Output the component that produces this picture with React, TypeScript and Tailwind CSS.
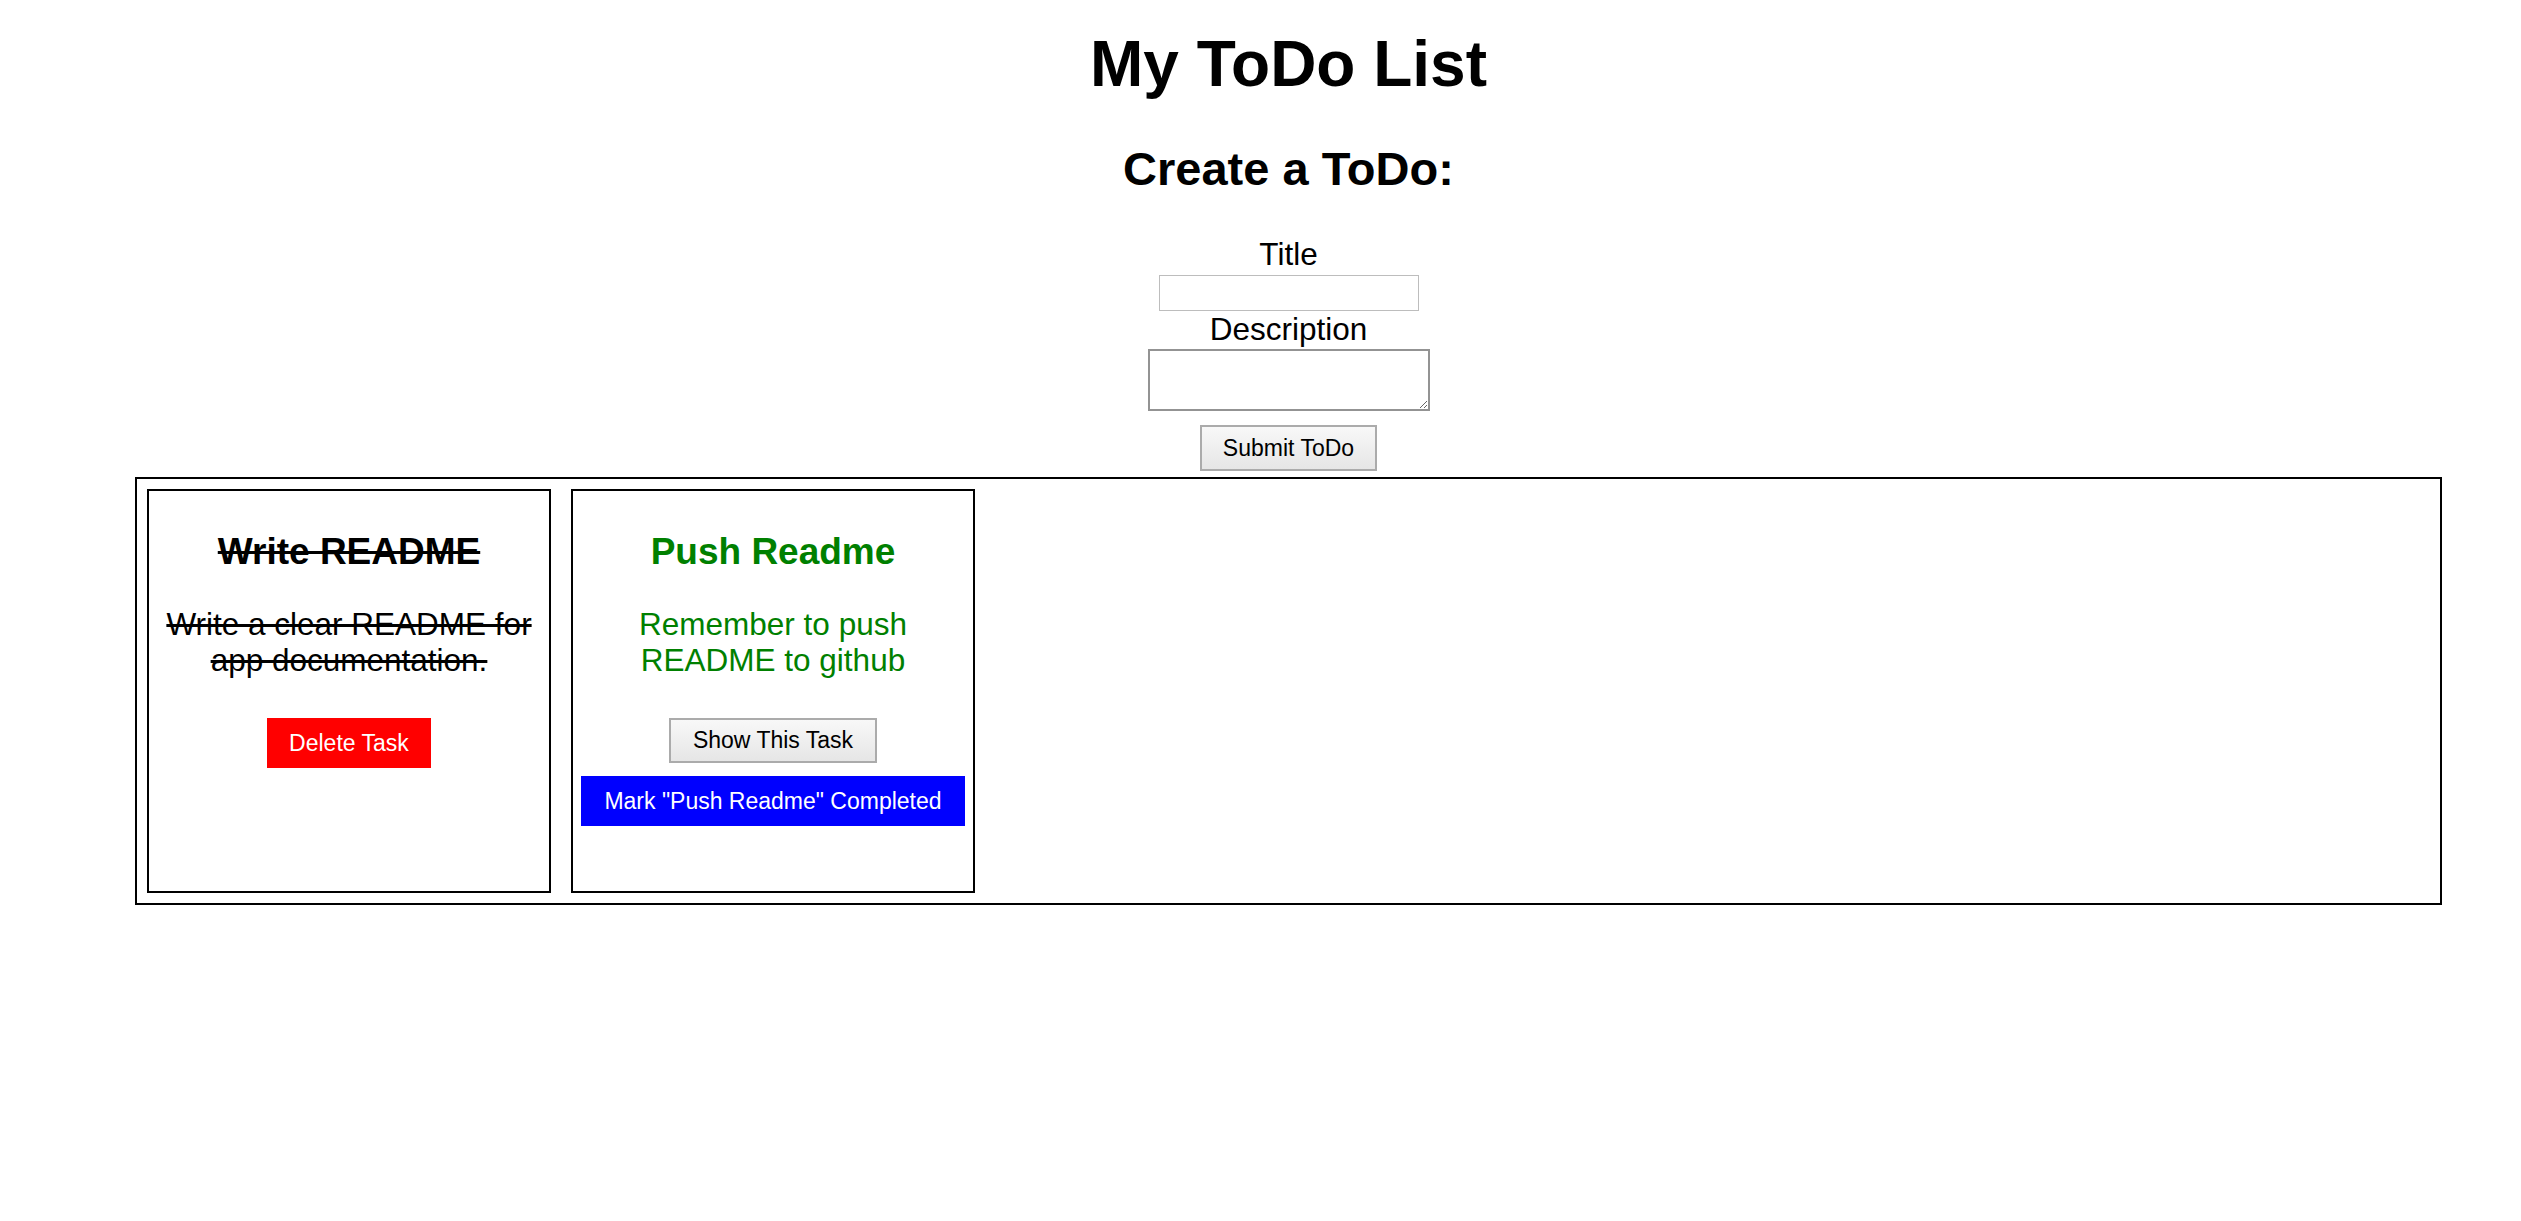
import React from "react";

function Card({ children }: { children: React.ReactNode }) {
  return (
    <div className="w-[404px] h-[404px] shrink-0 border-2 border-black flex flex-col items-center text-center px-[4px] pt-[39px]">
      {children}
    </div>
  );
}

export default function App() {
  return (
    <div className="min-h-screen bg-white text-black font-['Liberation_Sans','Helvetica','Arial',sans-serif]">
      <div className="ml-[135px] w-[2307px] text-center pt-[28px]">
        <h1 className="text-[64px] font-bold leading-[72px]">My ToDo List</h1>
        <h2 className="mt-[42px] text-[47px] font-bold leading-[54px]">Create a ToDo:</h2>
        <form className="mt-[40px] flex flex-col items-center" onSubmit={(e) => e.preventDefault()}>
          <label className="text-[31.5px] leading-[36px]">Title</label>
          <input
            type="text"
            className="mt-[3px] w-[260px] h-[36px] border border-[#bdbdbd] bg-white outline-none"
          />
          <label className="text-[31.5px] leading-[36px]">Description</label>
          <textarea className="mt-[2px] w-[282px] h-[62px] border-2 border-[#939393] bg-white resize outline-none" />
          <button
            type="submit"
            className="mt-[14px] h-[46px] px-[21px] border-2 border-[#ababab] bg-linear-to-b from-[#f8f8f8] to-[#e6e6e6] text-[23px] leading-none text-black"
          >
            Submit ToDo
          </button>
        </form>
        <div className="mt-[6px] border-2 border-black p-[10px] flex gap-[20px] text-left">
          <Card>
            <h3 className="text-[37px] font-bold leading-[43px] line-through">Write README</h3>
            <p className="mt-[33px] text-[31.5px] leading-[36px] line-through">
              Write a clear README for app documentation.
            </p>
            <button className="mt-[40px] h-[50px] px-[22px] bg-[#ff0000] text-white text-[23px] leading-none">
              Delete Task
            </button>
          </Card>
          <Card>
            <h3 className="text-[37px] font-bold leading-[43px] text-[#008000]">Push Readme</h3>
            <p className="mt-[33px] text-[31.5px] leading-[36px] text-[#008000]">
              Remember to push README to github
            </p>
            <button className="mt-[40px] h-[45px] px-[22px] border-2 border-[#ababab] bg-linear-to-b from-[#f8f8f8] to-[#e6e6e6] text-black text-[23px] leading-none">
              Show This Task
            </button>
            <button className="mt-[13px] h-[50px] px-[23px] bg-[#0000ff] text-white text-[23px] leading-none">
              Mark "Push Readme" Completed
            </button>
          </Card>
        </div>
      </div>
    </div>
  );
}
